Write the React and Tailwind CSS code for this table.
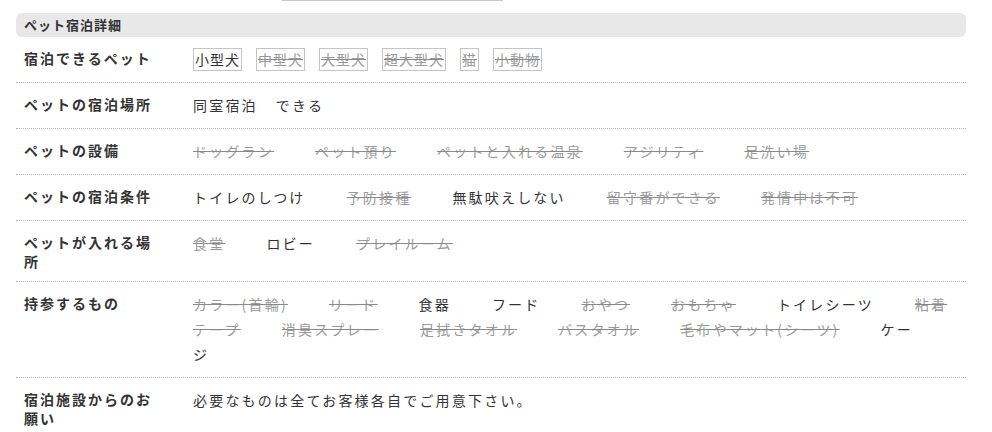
import React from 'react';

const petTypes = [
  { name: '小型犬', ok: true },
  { name: '中型犬', ok: false },
  { name: '大型犬', ok: false },
  { name: '超大型犬', ok: false },
  { name: '猫', ok: false },
  { name: '小動物', ok: false },
];

const rows = [
  {
    label: 'ペットの宿泊場所',
    items: [
      { name: '同室宿泊', ok: true, tight: true },
      { name: 'できる', ok: true },
    ],
  },
  {
    label: 'ペットの設備',
    items: [
      { name: 'ドッグラン', ok: false },
      { name: 'ペット預り', ok: false },
      { name: 'ペットと入れる温泉', ok: false },
      { name: 'アジリティ', ok: false },
      { name: '足洗い場', ok: false },
    ],
  },
  {
    label: 'ペットの宿泊条件',
    items: [
      { name: 'トイレのしつけ', ok: true },
      { name: '予防接種', ok: false },
      { name: '無駄吠えしない', ok: true },
      { name: '留守番ができる', ok: false },
      { name: '発情中は不可', ok: false },
    ],
  },
  {
    label: 'ペットが入れる場所',
    items: [
      { name: '食堂', ok: false },
      { name: 'ロビー', ok: true },
      { name: 'プレイルーム', ok: false },
    ],
  },
  {
    label: '持参するもの',
    items: [
      { name: 'カラー(首輪)', ok: false },
      { name: 'リード', ok: false },
      { name: '食器', ok: true },
      { name: 'フード', ok: true },
      { name: 'おやつ', ok: false },
      { name: 'おもちゃ', ok: false },
      { name: 'トイレシーツ', ok: true },
      { name: '粘着テープ', ok: false },
      { name: '消臭スプレー', ok: false },
      { name: '足拭きタオル', ok: false },
      { name: 'バスタオル', ok: false },
      { name: '毛布やマット(シーツ)', ok: false },
      { name: 'ケージ', ok: true },
    ],
  },
];

function Row({ label, children, last }) {
  return (
    <div className={`flex pl-2 pr-2 pt-[10px] pb-[10px] ${last ? '' : 'border-b border-dotted border-[#b5b5b5]'}`}>
      <div className="w-[169px] shrink-0 pr-[31px] pt-[2px] text-[14px] leading-[19px] font-bold tracking-[2px] text-[#333]">
        {label}
      </div>
      <div className="flex-1 min-w-0 text-[14px] leading-[25px] tracking-[2.2px] text-[#333] break-all">
        {children}
      </div>
    </div>
  );
}

export default function App() {
  return (
    <div className="w-[992px] h-[432px] bg-white overflow-hidden" style={{ fontFamily: '"Noto Sans CJK JP", "Noto Sans", sans-serif' }}>
      <div className="ml-[282px] w-[221px] h-px bg-[#c8c8c8]" />
      <div className="ml-4 mr-[26px] mt-3">
        <div className="h-6 rounded-[6px] bg-[#e8e8e8] pl-2 text-[13px] leading-6 font-semibold tracking-[1px] text-[#333]">
          ペット宿泊詳細
        </div>

        <Row label="宿泊できるペット">
          {petTypes.map((p) => (
            <span
              key={p.name}
              className={`inline-block mr-[14px] border border-[#c4c4c4] px-px leading-[21px] tracking-[1px] ${p.ok ? 'text-[#333]' : 'text-[#9a9a9a] line-through decoration-[#8a8a8a]'}`}
            >
              {p.name}
            </span>
          ))}
        </Row>

        {rows.map((r) => (
          <Row key={r.label} label={r.label}>
            {r.items.map((it) => (
              <span
                key={it.name}
                className={`${it.tight ? 'mr-[18px]' : 'mr-[41px]'} ${it.ok ? 'text-[#333]' : 'text-[#9a9a9a] line-through decoration-[#8a8a8a]'}`}
              >
                {it.name}
              </span>
            ))}
          </Row>
        ))}

        <Row label="宿泊施設からのお願い" last>
          必要なものは全てお客様各自でご用意下さい。
        </Row>
      </div>
    </div>
  );
}
